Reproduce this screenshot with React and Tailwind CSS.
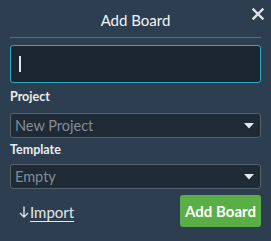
import React from "react";

function Caret() {
  return (
    <svg width="10" height="6" viewBox="0 0 10 6" className="shrink-0">
      <path d="M0 0 H10 L5 5.5 Z" fill="#e6e8ea" />
    </svg>
  );
}

export default function App() {
  return (
    <div
      className="relative w-[271px] h-[241px] bg-[#2c3e50] px-[10px] text-white overflow-hidden"
      style={{ fontFamily: "Lato, 'Open Sans', sans-serif" }}
    >
      <div className="h-[38px] flex items-center justify-center border-b border-[#626a73]">
        <span className="text-[15px] leading-none text-[#f2f4f5] mt-[4px]">Add Board</span>
      </div>
      <button className="absolute top-[7px] right-[6px] w-[14px] h-[14px] flex items-center justify-center">
        <svg width="12" height="12" viewBox="0 0 12 12">
          <path d="M1.5 1.5 L10.5 10.5 M10.5 1.5 L1.5 10.5" stroke="#dfe3e6" strokeWidth="2.4" strokeLinecap="square" />
        </svg>
      </button>

      <div className="mt-[7px] h-[38px] rounded-[3px] border border-[#27aec6] bg-[#1a252f] flex items-center pl-[8px]">
        <div className="w-[2px] h-[16px] bg-[#dfe3e6]" />
      </div>

      <div className="mt-[6px] text-[12.5px] leading-[16px] font-bold text-[#e9ecee]">Project</div>
      <div className="mt-[8px] h-[25px] rounded-[3px] border border-[#58616b] bg-[#1e2a36] flex items-center justify-between pl-[4px] pr-[6px]">
        <span className="text-[14.5px] leading-none text-[#848c95] mt-[1px]">New Project</span>
        <Caret />
      </div>

      <div className="mt-[4px] text-[12.5px] leading-[16px] font-bold text-[#e9ecee]">Template</div>
      <div className="mt-[6px] h-[25px] rounded-[3px] border border-[#58616b] bg-[#1e2a36] flex items-center justify-between pl-[4px] pr-[6px]">
        <span className="text-[14.5px] leading-none text-[#848c95] mt-[1px]">Empty</span>
        <Caret />
      </div>

      <div className="mt-[6px] flex items-center justify-between">
        <a className="ml-[9px] mt-[2px] flex items-center text-[15px] text-[#e3e6e9] cursor-pointer">
          <svg width="10" height="12" viewBox="0 0 10 12" className="mr-[1px]">
            <path d="M5 0.5 V11 M1 7 L5 11 L9 7" stroke="#dfe3e6" strokeWidth="1.4" fill="none" />
          </svg>
          <span className="underline underline-offset-[3px]">Import</span>
        </a>
        <button className="w-[81px] h-[32px] rounded-[3px] bg-[#5aae46] text-white font-bold text-[15px] leading-none">
          Add Board
        </button>
      </div>
    </div>
  );
}
